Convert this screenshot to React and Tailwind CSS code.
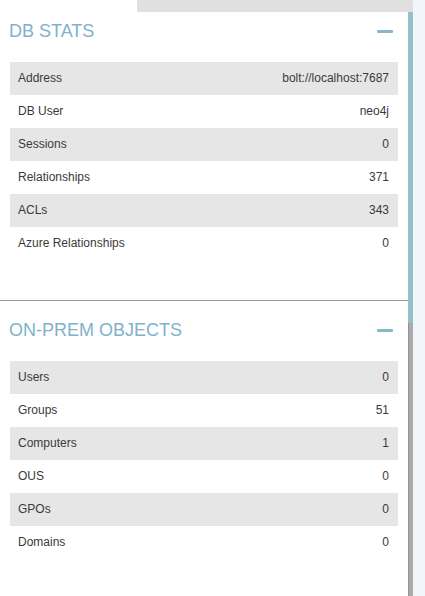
import React from 'react';

const dbStats = [
  ['Address', 'bolt://localhost:7687'],
  ['DB User', 'neo4j'],
  ['Sessions', '0'],
  ['Relationships', '371'],
  ['ACLs', '343'],
  ['Azure Relationships', '0'],
];

const onPrem = [
  ['Users', '0'],
  ['Groups', '51'],
  ['Computers', '1'],
  ['OUS', '0'],
  ['GPOs', '0'],
  ['Domains', '0'],
];

function StatRows({ rows }) {
  return (
    <div className="flex flex-col">
      {rows.map(([label, value], i) => (
        <div
          key={label}
          className={`flex h-[33px] items-center justify-between pb-[2px] pl-[8px] pr-[9px] text-[12px] text-[#3a3a3a] ${i % 2 === 0 ? 'bg-[#e6e6e6]' : 'bg-white'}`}
        >
          <span>{label}</span>
          <span>{value}</span>
        </div>
      ))}
    </div>
  );
}

function Header({ title }) {
  return (
    <div className="flex h-[38px] items-center justify-between pl-[9px] pr-[15px]">
      <h2 className="text-[18px] leading-none text-[#80b3ca]">{title}</h2>
      <div className="h-[3px] w-[16px] rounded-[1px] bg-[#89b6c9]" />
    </div>
  );
}

export default function App() {
  return (
    <div className="flex h-[596px] w-[425px] overflow-hidden bg-white font-['Liberation_Sans',Arial,sans-serif]">
      <div className="flex w-[413px] flex-col">
        {/* top strip */}
        <div className="flex h-[12px]">
          <div className="w-[137px] bg-white" />
          <div className="flex-1 bg-[#e0e0e0]" />
        </div>

        <div className="flex flex-1">
          <div className="flex w-[408px] flex-col">
            {/* DB stats */}
            <section className="border-b border-[#999] pb-[40px]">
              <Header title="DB STATS" />
              <div className="mx-[10px] mt-[12px]">
                <StatRows rows={dbStats} />
              </div>
            </section>

            {/* On-prem objects */}
            <section className="pt-[10px]">
              <Header title="ON-PREM OBJECTS" />
              <div className="mx-[10px] mt-[12px]">
                <StatRows rows={onPrem} />
              </div>
            </section>
          </div>

          {/* scroll bar */}
          <div className="flex w-[5px] flex-col">
            <div className="h-[311px] bg-[#93c1c7]" />
            <div className="flex-1 border-l border-[#939393] bg-[#ababab]" />
          </div>
        </div>
      </div>
      <div className="flex-1 bg-[#f2f5fa]" />
    </div>
  );
}
